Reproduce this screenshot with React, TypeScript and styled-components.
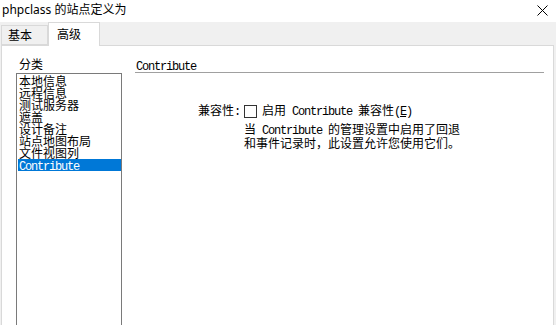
import React from "react";
import styled, { createGlobalStyle } from "styled-components";

const Global = createGlobalStyle`
  html, body { margin: 0; padding: 0; background: #f0f0f0; }
  body { font-family: "Noto Sans", "Noto Sans CJK SC", sans-serif; }
`;

const Window = styled.div`
  width: 556px;
  height: 325px;
  overflow: hidden;
  display: flex;
  flex-direction: column;
  background: #f0f0f0;
`;

const TitleBar = styled.div`
  height: 22px;
  flex: none;
  background: #ffffff;
  display: flex;
  align-items: center;
  justify-content: space-between;
  padding: 0 8px 0 2px;
  font-family: "Noto Sans", "Noto Sans CJK SC", sans-serif;
  font-size: 12px;
  color: #000;
`;

const TitleText = styled.span`
  line-height: 14px;
  margin-top: -2px;
`;

const CloseIcon = styled.svg`
  width: 11px;
  height: 11px;
  margin-top: -2px;
`;

const TabBar = styled.div`
  height: 23px;
  flex: none;
  display: flex;
  align-items: flex-end;
  padding-left: 1px;
  position: relative;
  z-index: 2;
`;

const Tab = styled.div<{ $active?: boolean }>`
  box-sizing: border-box;
  height: ${(p) => (p.$active ? "24px" : "20px")};
  margin-bottom: ${(p) => (p.$active ? "-1px" : "0")};
  width: ${(p) => (p.$active ? "52px" : "47px")};
  border: 1px solid #d9d9d9;
  border-bottom: ${(p) => (p.$active ? "none" : "1px solid #d9d9d9")};
  border-left: ${(p) => (p.$active ? "1px solid #d9d9d9" : "1px solid #d9d9d9")};
  background: ${(p) => (p.$active ? "#ffffff" : "#f0f0f0")};
  font-family: "Noto Sans CJK SC", sans-serif;
  font-size: 12px;
  line-height: 14px;
  padding: ${(p) => (p.$active ? "4px 0 0 8px" : "2px 0 0 6px")};
  color: #000;
`;

const Panel = styled.div`
  flex: 1;
  margin: 0 2px 0 1px;
  border: 1px solid #d9d9d9;
  border-bottom: none;
  background: #ffffff;
  display: flex;
  padding: 11px 0 0 14px;
  gap: 13px;
`;

const LeftCol = styled.div`
  width: 106px;
  display: flex;
  flex-direction: column;
`;

const Label = styled.div`
  font-family: "Noto Sans CJK SC", sans-serif;
  font-size: 12px;
  line-height: 14px;
  height: 14px;
  padding-left: 3px;
  margin-bottom: 2px;
  color: #000;
`;

const ListBox = styled.div`
  box-sizing: border-box;
  width: 106px;
  height: 270px;
  border: 1px solid #7a7a7a;
  padding: 1px 0 0 1px;
  display: flex;
  flex-direction: column;
`;

const ListItem = styled.div<{ $selected?: boolean }>`
  height: 12px;
  line-height: 12px;
  padding-left: 1px;
  font-family: "Noto Sans CJK SC", sans-serif;
  font-size: 12px;
  white-space: nowrap;
  color: ${(p) => (p.$selected ? "#ffffff" : "#000000")};
  background: ${(p) => (p.$selected ? "#0078d7" : "transparent")};
`;

const Mono = styled.span`
  font-family: "Liberation Mono", monospace;
  font-size: 12px;
  letter-spacing: -1.2px;
`;

const RightCol = styled.div`
  width: 409px;
  display: flex;
  flex-direction: column;
`;

const Heading = styled.div`
  height: 15px;
  line-height: 14px;
  border-bottom: 1px solid #a0a0a0;
  padding-left: 1px;
  color: #000;
`;

const FormGrid = styled.div`
  margin-top: 30px;
  display: grid;
  grid-template-columns: 106px auto;
  column-gap: 3px;
  row-gap: 4px;
  font-family: "Noto Sans CJK SC", sans-serif;
  font-size: 12px;
  color: #000;
`;

const FieldLabel = styled.div`
  text-align: right;
  line-height: 14px;
  padding-right: 1px;
`;

const CheckRow = styled.label`
  display: flex;
  align-items: center;
  gap: 5px;
  line-height: 14px;
`;

const CheckBox = styled.span`
  box-sizing: border-box;
  width: 13px;
  height: 13px;
  border: 1px solid #333333;
  background: #ffffff;
  flex: none;
`;

const Underlined = styled.span`
  text-decoration: underline;
`;

const Description = styled.div`
  grid-column: 2;
  line-height: 12px;
  white-space: nowrap;
`;

const items = ["本地信息", "远程信息", "测试服务器", "遮盖", "设计备注", "站点地图布局", "文件视图列"];

export default function App() {
  return (
    <>
      <Global />
      <Window>
        <TitleBar>
          <TitleText>phpclass 的站点定义为</TitleText>
          <CloseIcon viewBox="0 0 11 11">
            <path d="M0.5 0.5 L10.5 10.5 M10.5 0.5 L0.5 10.5" stroke="#000" strokeWidth="1" fill="none" />
          </CloseIcon>
        </TitleBar>
        <TabBar>
          <Tab>基本</Tab>
          <Tab $active>高级</Tab>
        </TabBar>
        <Panel>
          <LeftCol>
            <Label>分类</Label>
            <ListBox>
              {items.map((t) => (
                <ListItem key={t}>{t}</ListItem>
              ))}
              <ListItem $selected>
                <Mono>Contribute</Mono>
              </ListItem>
            </ListBox>
          </LeftCol>
          <RightCol>
            <Heading>
              <Mono>Contribute</Mono>
            </Heading>
            <FormGrid>
              <FieldLabel>
                兼容性<Mono>:</Mono>
              </FieldLabel>
              <CheckRow>
                <CheckBox />
                <span>
                  启用<Mono> Contribute </Mono>兼容性<Mono>(<Underlined>E</Underlined>)</Mono>
                </span>
              </CheckRow>
              <Description>
                当<Mono> Contribute </Mono>的管理设置中启用了回退
                <br />
                和事件记录时，此设置允许您使用它们。
              </Description>
            </FormGrid>
          </RightCol>
        </Panel>
      </Window>
    </>
  );
}
